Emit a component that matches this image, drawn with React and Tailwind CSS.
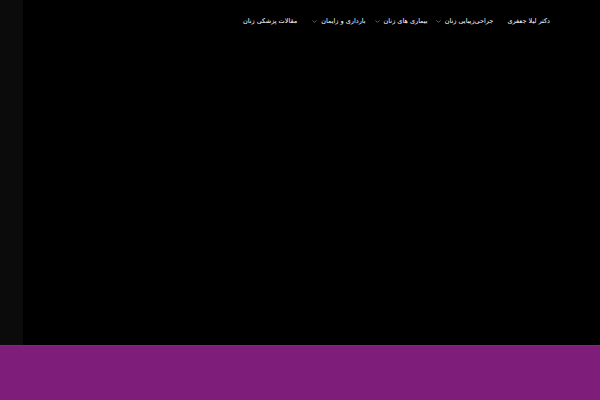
import { ChevronDown } from "lucide-react";

const items = [
  { label: "دکتر لیلا جعفری", sub: false, gap: "ml-[14px]" },
  { label: "جراحی‌زیبایی زنان", sub: true, gap: "ml-[7px]" },
  { label: "بیماری های زنان", sub: true, gap: "ml-[8px]" },
  { label: "بارداری و زایمان", sub: true, gap: "ml-[14px]" },
  { label: "مقالات پزشکی زنان", sub: false, gap: "" },
];

export default function App() {
  return (
    <div className="w-[600px] h-[400px] flex flex-col bg-black overflow-hidden" style={{ fontFamily: '"DejaVu Sans", sans-serif' }}>
      <div className="h-[345px] flex">
        {/* left strip */}
        <div className="w-[23px] bg-[#0b0b0b]" />
        <div className="flex-1 bg-black">
          <nav dir="rtl" className="flex items-center h-[40px] pt-[3px] pr-[50px] text-white text-[6.5px]">
            {items.map((it) => (
              <div key={it.label} className={"flex items-center gap-[3px] " + it.gap}>
                <span>{it.label}</span>
                {it.sub && <ChevronDown className="w-[7px] h-[7px] text-gray-400" strokeWidth={2} />}
              </div>
            ))}
          </nav>
        </div>
      </div>
      <div className="flex-1 bg-[#7e1e7a] border-t border-[#8a2386]" />
    </div>
  );
}
